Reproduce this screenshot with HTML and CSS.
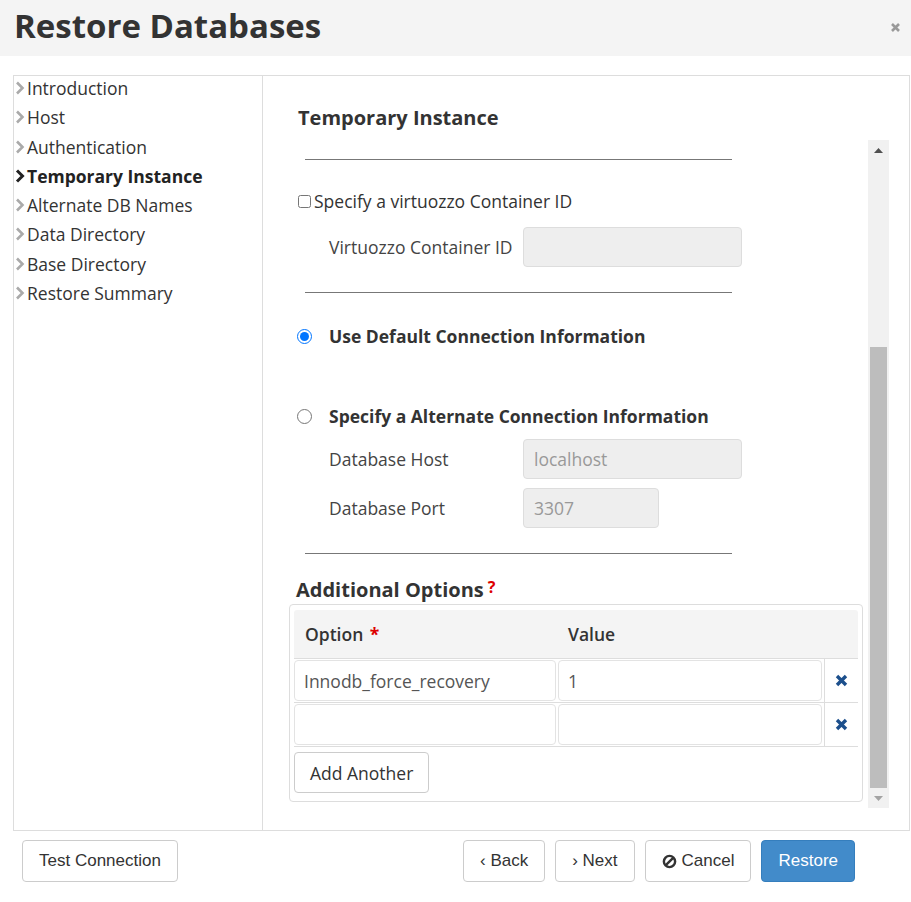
FILE: index.html
```html
<!DOCTYPE html>
<html>
    <head>
        <title>Restore Databases</title>
        <link rel="stylesheet" href="styles.css">
    </head>
    <body>
        <div class="modalHeader">
            <h1 class="modalTitle">Restore Databases</h1>
            <span class="close">
                <svg width="11" height="11" viewBox="0 0 11 11"><path d="M2 2L9 9M9 2L2 9" stroke="#999" stroke-width="2.6"/></svg>
            </span>
        </div>
        <div class="wizard">
            <!-- 왼쪽 단계 목록 -->
            <ul class="steps">
                <li class="step"><svg class="chev" viewBox="0 0 10 14"><path d="M2 1.5L7.5 7L2 12.5" /></svg>Introduction</li>
                <li class="step"><svg class="chev" viewBox="0 0 10 14"><path d="M2 1.5L7.5 7L2 12.5" /></svg>Host</li>
                <li class="step"><svg class="chev" viewBox="0 0 10 14"><path d="M2 1.5L7.5 7L2 12.5" /></svg>Authentication</li>
                <li class="step active"><svg class="chev" viewBox="0 0 10 14"><path d="M2 1.5L7.5 7L2 12.5" /></svg>Temporary Instance</li>
                <li class="step"><svg class="chev" viewBox="0 0 10 14"><path d="M2 1.5L7.5 7L2 12.5" /></svg>Alternate DB Names</li>
                <li class="step"><svg class="chev" viewBox="0 0 10 14"><path d="M2 1.5L7.5 7L2 12.5" /></svg>Data Directory</li>
                <li class="step"><svg class="chev" viewBox="0 0 10 14"><path d="M2 1.5L7.5 7L2 12.5" /></svg>Base Directory</li>
                <li class="step"><svg class="chev" viewBox="0 0 10 14"><path d="M2 1.5L7.5 7L2 12.5" /></svg>Restore Summary</li>
            </ul>
            <div class="pane">
                <div class="content">
                    <h2 class="sectionTitle">Temporary Instance</h2>
                    <div class="rule rule-first"></div>
                    <label class="checkRow"><input type="checkbox">Specify a virtuozzo Container ID</label>
                    <div class="field field-ctid">
                        <span class="fieldLabel">Virtuozzo Container ID</span>
                        <input class="textInput wide" type="text" disabled>
                    </div>
                    <div class="rule rule-mid"></div>
                    <label class="radioRow radio-default"><input type="radio" name="conn" checked><span>Use Default Connection Information</span></label>
                    <label class="radioRow radio-alt"><input type="radio" name="conn"><span>Specify a Alternate Connection Information</span></label>
                    <div class="field field-host">
                        <span class="fieldLabel">Database Host</span>
                        <input class="textInput wide" type="text" placeholder="localhost" disabled>
                    </div>
                    <div class="field field-port">
                        <span class="fieldLabel">Database Port</span>
                        <input class="textInput narrow" type="text" placeholder="3307" disabled>
                    </div>
                    <div class="rule rule-last"></div>
                    <h3 class="optTitle">Additional Options<span class="help">?</span></h3>
                    <div class="optBox">
                        <div class="optHead">
                            <span class="colOption">Option <span class="req">*</span></span>
                            <span class="colValue">Value</span>
                            <span></span>
                        </div>
                        <div class="optRow">
                            <input class="cellInput" type="text" value="Innodb_force_recovery">
                            <input class="cellInput" type="text" value="1">
                            <span class="remove"><svg width="13" height="13" viewBox="0 0 13 13"><path d="M2 2L11 11M11 2L2 11" stroke="#1c4f8c" stroke-width="3.4"/></svg></span>
                        </div>
                        <div class="optRow">
                            <input class="cellInput" type="text">
                            <input class="cellInput" type="text">
                            <span class="remove"><svg width="13" height="13" viewBox="0 0 13 13"><path d="M2 2L11 11M11 2L2 11" stroke="#1c4f8c" stroke-width="3.4"/></svg></span>
                        </div>
                        <button class="addBtn">Add Another</button>
                    </div>
                </div>
                <!-- 스크롤바 -->
                <div class="scrollbar">
                    <div class="arrow"><svg width="9" height="5" viewBox="0 0 9 5"><path d="M0 5L4.5 0L9 5Z" fill="#505050"/></svg></div>
                    <div class="thumb"></div>
                    <div class="arrow"><svg width="9" height="5" viewBox="0 0 9 5"><path d="M0 0L4.5 5L9 0Z" fill="#a3a3a3"/></svg></div>
                </div>
            </div>
        </div>
        <div class="footer">
            <button class="btn">Test Connection</button>
            <div class="btnGroup">
                <button class="btn">&#8249; Back</button>
                <button class="btn">&#8250; Next</button>
                <button class="btn btn-cancel">
                    <svg width="15" height="15" viewBox="0 0 16 16"><circle cx="8" cy="8" r="6" fill="none" stroke="#333" stroke-width="2.6"/><path d="M12.2 3.8L3.8 12.2" stroke="#333" stroke-width="2.6"/></svg>
                    Cancel
                </button>
                <button class="btn btn-primary">Restore</button>
            </div>
        </div>
    </body>
</html>
```
FILE: styles.css
```css
html,body {
    margin:0;
    background: #fff;
}
body {
    font-family: "Open Sans", sans-serif;
    color: #333;
}
/* header */
.modalHeader {
    height: 56px;
    background-color: #f4f4f4;
    display: flex;
    justify-content: space-between;
    align-items: center;
    padding: 0 10px 0 14px;
}
.modalTitle {
    margin: 0;
    font-size: 33px;
    font-weight: 700;
    color: #333;
    line-height: 44px;
    margin-top: -4px;
}
.close {
    display: flex;
    margin-top: -2px;
}
/* 본문 */
.wizard {
    display: flex;
    margin: 19px 1px 0 13px;
    border: 1px solid #ddd;
    height: 754px;
}
.steps {
    list-style: none;
    margin: 0;
    padding: 0;
    width: 248px;
    border-right: 1px solid #ddd;
}
.step {
    display: flex;
    align-items: center;
    font-size: 17.5px;
    line-height: 24px;
    margin-bottom: 5.3px;
    color: #333;
}
.chev {
    width: 10px;
    height: 14px;
    margin: 0 2px 0 1px;
    fill: none;
    stroke: #aaa;
    stroke-width: 2.6;
}
.active {
    font-weight: 700;
    color: #222;
}
.active .chev {
    stroke: #222;
    stroke-width: 3;
}
.pane {
    flex: 1;
    display: flex;
}
.content {
    flex: 1;
    padding-left: 26px;
    padding-right: 5px;
}
.sectionTitle {
    margin: 30px 0 0 9px;
    font-size: 20px;
    line-height: 24px;
    font-weight: 700;
}
.rule {
    width: 427px;
    height: 1px;
    background: #777;
    margin-left: 16px;
}
.rule-first {
    margin-top: 29px;
}
.rule-mid {
    margin-top: 25px;
}
.rule-last {
    margin-top: 25px;
}
.checkRow {
    display: flex;
    align-items: center;
    margin: 29px 0 0 9px;
    font-size: 17.5px;
    line-height: 24px;
}
.checkRow input {
    margin: 0 3px 0 0;
    width: 13px;
    height: 13px;
}
.field {
    display: flex;
    align-items: center;
    margin-left: 40px;
}
.field-ctid {
    margin-top: 14px;
}
.field-host {
    margin-top: 11px;
}
.field-port {
    margin-top: 9px;
}
.fieldLabel {
    width: 194px;
    font-size: 17.5px;
    color: #444;
}
.textInput {
    height: 40px;
    box-sizing: border-box;
    border: 1px solid #ddd;
    border-radius: 4px;
    background: #eee;
    padding: 0 10px;
    font-family: "Open Sans", sans-serif;
    font-size: 17.5px;
}
.textInput::placeholder {
    color: #999;
}
.wide {
    width: 219px;
}
.narrow {
    width: 136px;
}
.radioRow {
    display: flex;
    align-items: center;
    margin-left: 8px;
    font-size: 17.5px;
    line-height: 24px;
    font-weight: 700;
}
.radioRow input {
    margin: 0 17px 0 0;
    width: 15px;
    height: 15px;
}
.radio-default {
    margin-top: 31px;
}
.radio-alt {
    margin-top: 56px;
}
.optTitle {
    margin: 23px 0 0 7px;
    font-size: 20px;
    line-height: 26px;
    font-weight: 700;
}
.help {
    color: #d00;
    font-size: 16px;
    vertical-align: top;
    margin-left: 4px;
    position: relative;
    top: -3px;
}
.optBox {
    margin-top: 1px;
    border: 1px solid #ddd;
    border-radius: 4px;
    padding: 5px 4px 8px 4px;
}
.optHead {
    display: grid;
    grid-template-columns: 264px 266px 1fr;
    height: 48px;
    align-items: center;
    background: #f4f4f4;
    font-size: 17.5px;
    font-weight: 600;
    border-radius: 3px 3px 0 0;
}
.colOption {
    padding-left: 11px;
}
.colValue {
    padding-left: 10px;
}
.req {
    color: #d00;
    font-weight: 700;
    margin-left: 2px;
}
.optRow {
    display: grid;
    grid-template-columns: 264px 266px 1fr;
    border-top: 1px solid #ddd;
    padding: 1px 0;
}
.optRow:last-of-type {
    border-bottom: 1px solid #ddd;
}
.cellInput {
    height: 41px;
    box-sizing: border-box;
    border: 1px solid #e3e3e3;
    border-radius: 4px;
    padding: 0 9px;
    font-family: "Open Sans", sans-serif;
    font-size: 17.5px;
    color: #555;
    margin-right: 2px;
}
.remove {
    display: flex;
    align-items: center;
    justify-content: center;
    border-left: 1px solid #ddd;
    margin: -1px 0;
}
.addBtn {
    margin-top: 5px;
    height: 41px;
    padding: 0 15px;
    background: #fff;
    border: 1px solid #ccc;
    border-radius: 4px;
    font-family: "Open Sans", sans-serif;
    font-size: 17.5px;
    color: #333;
}
/* 가짜 스크롤바 */
.scrollbar {
    width: 21px;
    margin: 64px 20px 0 0;
    height: 668px;
    background: #f1f1f1;
    display: flex;
    flex-direction: column;
    align-items: center;
}
.arrow {
    height: 20px;
    display: flex;
    align-items: center;
    justify-content: center;
}
.thumb {
    margin-top: auto;
    width: 17px;
    height: 441px;
    background: #bdbdbd;
}
/* 하단 버튼 */
.footer {
    display: flex;
    justify-content: space-between;
    margin: 9px 56px 0 22px;
}
.btnGroup {
    display: flex;
    gap: 10px;
}
.btn {
    height: 42px;
    padding: 0 16px;
    background: #fff;
    border: 1px solid #ccc;
    border-radius: 4px;
    font-family: "Liberation Sans", Arial, sans-serif;
    font-size: 17px;
    color: #333;
    display: flex;
    align-items: center;
    gap: 4px;
}
.btn-cancel {
    gap: 5px;
}
.btn-primary {
    background: #428bca;
    border-color: #357ebd;
    color: #fff;
}
```
